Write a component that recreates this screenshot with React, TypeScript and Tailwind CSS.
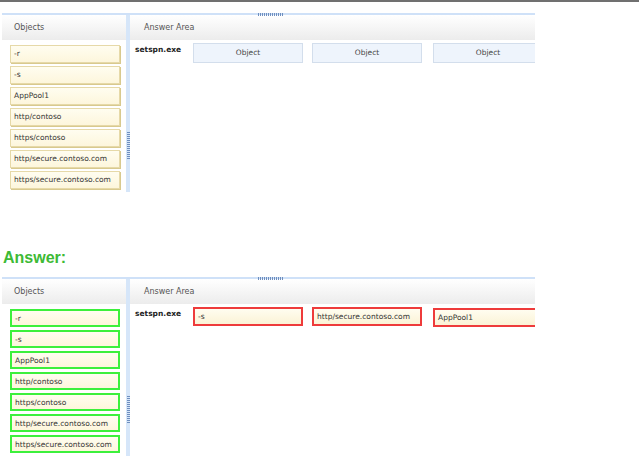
import React from "react";

const objects = [
  "-r",
  "-s",
  "AppPool1",
  "http/contoso",
  "https/contoso",
  "http/secure.contoso.com",
  "https/secure.contoso.com",
];

const answers = ["-s", "http/secure.contoso.com", "AppPool1"];

function Grip({ vertical }: { vertical?: boolean }) {
  return (
    <div
      className={
        vertical
          ? "w-[3px] h-[28px] bg-[repeating-linear-gradient(0deg,#6f8fbf_0px,#6f8fbf_1px,transparent_1px,transparent_2px)]"
          : "w-[26px] h-[3px] bg-[repeating-linear-gradient(90deg,#6f8fbf_0px,#6f8fbf_1px,transparent_1px,transparent_2px)]"
      }
    />
  );
}

function Item({ label, marked }: { label: string; marked?: boolean }) {
  return (
    <div
      className={
        "w-[110px] h-[18px] flex items-start pt-[2px] pl-[3px] text-[7.5px] text-[#333] bg-gradient-to-b from-[#fffdf0] to-[#fdf6dc] " +
        (marked
          ? "border-2 border-[#3cf03c]"
          : "border border-[#e6d9a8] shadow-[1px_1px_0_#d8c98e]")
      }
    >
      {label}
    </div>
  );
}

function Slot({ label, answer, last }: { label: string; answer?: boolean; last?: boolean }) {
  if (answer) {
    return (
      <div
        className={
          "shrink-0 w-[110px] h-[19px] flex items-start pt-[2px] pl-[3px] text-[7.5px] text-[#333] bg-gradient-to-b from-[#fffdf0] to-[#fbf3d6] border-2 border-[#ee3b3b] " +
          (last ? "ml-[2px] mt-[1px]" : "")
        }
      >
        {label}
      </div>
    );
  }
  return (
    <div
      className={
        "shrink-0 w-[110px] h-[20px] flex items-center justify-center text-[7.5px] text-[#444] bg-[#eef4fc] border border-[#d3deec] " +
        (last ? "ml-[2px]" : "")
      }
    >
      {label}
    </div>
  );
}

function Panel({ answer }: { answer?: boolean }) {
  return (
    <div className="relative ml-[2px] w-[533px] border-t-2 border-[#cfe1f8] font-['DejaVu_Sans',sans-serif]">
      <div className="absolute left-[256px] -top-[2px]">
        <Grip />
      </div>
      <div className="flex h-[177px]">
        <div className="w-[124px] shrink-0 flex flex-col">
          <div className="h-[25px] flex items-center pl-[12px] text-[8px] text-[#555] bg-gradient-to-b from-white to-[#ececec]">
            Objects
          </div>
          <div className="flex flex-col gap-[3px] pl-[8px] pt-[5px]">
            {objects.map((o) => (
              <Item key={o} label={o} marked={answer} />
            ))}
          </div>
        </div>
        <div className="w-[4px] shrink-0 bg-[#d6e6f9] flex flex-col items-center">
          <div className="mt-[116px]">
            <Grip vertical />
          </div>
        </div>
        <div className="flex-1 min-w-0 overflow-hidden flex flex-col">
          <div className="h-[25px] flex items-center pl-[14px] text-[8px] text-[#555] bg-gradient-to-b from-white to-[#ececec]">
            Answer Area
          </div>
          <div className="flex items-start pl-[5px] pt-[3px]">
            <div className="w-[58px] shrink-0 text-[7.5px] font-bold text-[#222] pt-[1px]">setspn.exe</div>
            <div className="flex items-start gap-[9px]">
              {(answer ? answers : ["Object", "Object", "Object"]).map((a, i) => (
                <Slot key={i} label={a} answer={answer} last={i === 2} />
              ))}
            </div>
          </div>
        </div>
      </div>
    </div>
  );
}

export default function App() {
  return (
    <div className="w-[639px] h-[474px] bg-white overflow-hidden">
      <div className="h-[2px] bg-[#707070]" />
      <div className="mt-[11px]">
        <Panel />
      </div>
      <div className="mt-[56px] ml-[3px] text-[16px] leading-[20px] font-bold text-[#3dba35] font-['Liberation_Sans',Arial,sans-serif]">
        Answer:
      </div>
      <div className="mt-[9px]">
        <Panel answer />
      </div>
    </div>
  );
}
